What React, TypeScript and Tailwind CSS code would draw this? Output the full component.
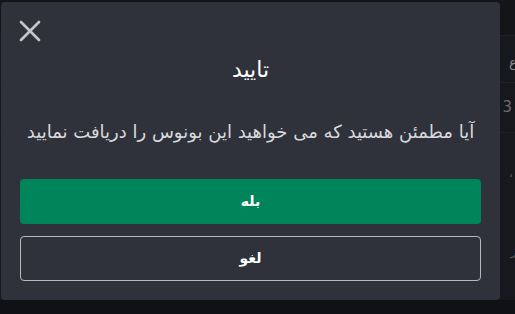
import { X } from 'lucide-react'

const font = { fontFamily: '"DejaVu Sans", "Noto Sans", sans-serif' }

function BackgroundTable() {
  return (
    <div className="flex h-[300px] w-full flex-col bg-[#17181d]" dir="rtl">
      <div className="h-[36px] shrink-0 border-b border-[#202127] bg-[#141519]" />
      <div className="flex h-[47px] shrink-0 items-center border-b border-[#202127] pt-[8px]">
        <span className="mr-[-12px] text-[13px] text-[#8a8b90]">نوع</span>
      </div>
      <div className="flex h-[50px] shrink-0 items-center border-b border-[#202127]">
        <span className="mr-[3px] text-[15px] text-[#6b6c70]">3</span>
      </div>
      <div className="flex flex-1 flex-col justify-around pb-[10px]">
        <span className="mr-[2px] text-[13px] text-[#55565a]">،</span>
        <span className="mr-[-2px] text-[13px] text-[#55565a]">ز</span>
      </div>
    </div>
  )
}

export default function App() {
  return (
    <div className="relative h-[314px] w-[515px] overflow-hidden bg-[#101115]" style={font}>
      <BackgroundTable />

      <div
        className="absolute left-[1px] top-[2px] flex h-[298px] w-[499px] flex-col rounded-[4px] bg-[#2f323b] px-[19px]"
        dir="rtl"
      >
        <button className="absolute left-[11px] top-[11px] text-[#c4c5c8]">
          <X className="h-[36px] w-[36px]" strokeWidth={1.8} />
        </button>

        <h2 className="mt-[54px] text-center text-[22px] leading-[28px] text-white">تایید</h2>

        <p className="mt-[35px] text-center text-[18px] leading-[26px] text-[#d8d9dc]">
          آیا مطمئن هستید که می خواهید این بونوس را دریافت نمایید
        </p>

        <button className="mt-[34px] flex h-[45px] w-full shrink-0 items-center justify-center rounded-[4px] bg-[#008459] text-[14px] font-bold text-white">
          بله
        </button>

        <button className="mt-[12px] flex h-[45px] w-full shrink-0 items-center justify-center rounded-[4px] border border-[#b8b9bd] text-[14px] font-bold text-white">
          لغو
        </button>
      </div>
    </div>
  )
}
